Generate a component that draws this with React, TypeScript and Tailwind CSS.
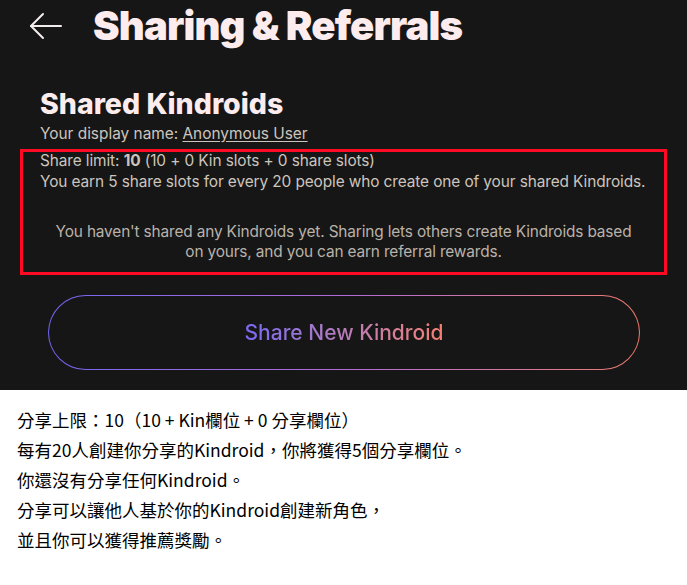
import React from 'react';

const BackArrow: React.FC = () => (
  <svg width="34" height="28" viewBox="0 0 34 28" fill="none" stroke="#f4ecec" strokeWidth="2" strokeLinecap="round" strokeLinejoin="round">
    <path d="M2 14H32" />
    <path d="M14 2L2 14L14 26" />
  </svg>
);

const App: React.FC = () => {
  return (
    <div className="w-[687px] h-[585px] flex flex-col overflow-hidden">
      {/* Dark app screen */}
      <div className="h-[390px] bg-[#161616] font-['Inter',sans-serif]">
        {/* Header */}
        <div className="flex items-center h-[52px] pl-[29px]">
          <BackArrow />
          <h1 className="ml-[30px] text-[40px] leading-none font-black tracking-[-0.85px] text-[#fcecee]">
            Sharing &amp; Referrals
          </h1>
        </div>

        <div className="px-10 pt-[36px]">
          <h2 className="text-[28.5px] leading-[32px] font-extrabold text-[#fcecee]">Shared Kindroids</h2>
          <p className="mt-[4px] text-[15.4px] leading-[20px] text-[#cdc5bd]">
            Your display name: <span className="underline underline-offset-2">Anonymous User</span>
          </p>

          {/* Highlighted share info */}
          <div className="relative mt-[6px]">
            <div className="absolute -left-5 -right-5 -top-[1px] -bottom-[13px] border-[3px] border-[#ff0a24] pointer-events-none" />
            <p className="text-[15.4px] leading-[21px] text-[#cdc5bd] tracking-[-0.1px]">
              Share limit: <span className="font-bold">10</span> (10 + 0 Kin slots + 0 share slots)
            </p>
            <p className="text-[15.4px] leading-[21px] text-[#cdc5bd] tracking-[-0.1px] whitespace-nowrap">
              You earn 5 share slots for every 20 people who create one of your shared Kindroids.
            </p>
            <p className="mt-[30px] px-2 text-center text-[15.4px] leading-[20px] tracking-[-0.15px] text-[#bab2aa]">
              You haven't shared any Kindroids yet. Sharing lets others create Kindroids based on yours, and you can earn referral rewards.
            </p>
          </div>

          {/* Share button */}
          <div className="mt-[33px] ml-2 mr-[7px] rounded-full p-px bg-gradient-to-r from-[#7466f2] via-[#b26ad6] to-[#f07a6c]">
            <div className="h-[73px] rounded-full bg-[#161616] flex items-center justify-center">
              <span className="text-[21px] font-medium bg-gradient-to-r from-[#7a68f4] to-[#f47e70] bg-clip-text text-transparent">
                Share New Kindroid
              </span>
            </div>
          </div>
        </div>
      </div>

      {/* Translation notes */}
      <div className="flex-1 bg-white pl-[17px] pt-[15px] text-[17.5px] leading-[30px] text-black font-['Noto_Sans_CJK_TC','Noto_Sans',sans-serif]">
        <p>分享上限：10（10 + Kin欄位 + 0 分享欄位）</p>
        <p>每有20人創建你分享的Kindroid，你將獲得5個分享欄位。</p>
        <p>你還沒有分享任何Kindroid。</p>
        <p>分享可以讓他人基於你的Kindroid創建新角色，</p>
        <p>並且你可以獲得推薦獎勵。</p>
      </div>
    </div>
  );
};

export default App;
